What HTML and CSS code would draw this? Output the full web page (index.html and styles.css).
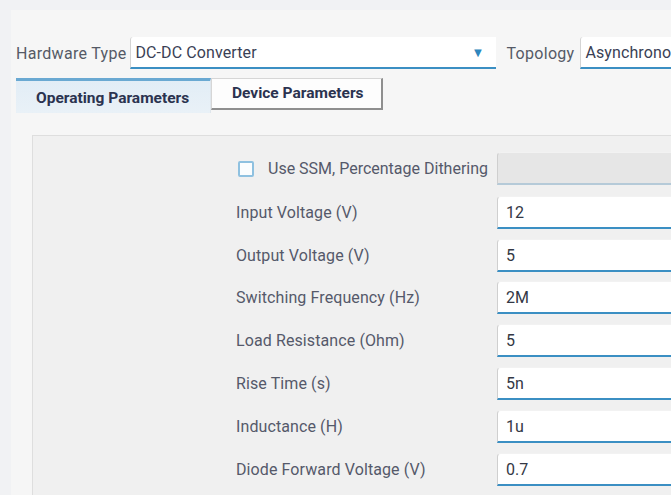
FILE: index.html
```html
<!DOCTYPE html>
<html lang="en">
<head>
<meta charset="utf-8">
<title>Simulation Setup</title>
<link rel="stylesheet" href="styles.css">
</head>
<body>
<div class="window">
  <div class="toolbar">
    <span class="field-label">Hardware Type</span>
    <div class="select hw-select">
      <span class="select-value">DC-DC Converter</span>
      <span class="select-arrow">&#9660;</span>
    </div>
    <span class="field-label topo-label">Topology</span>
    <div class="select topo-select">
      <span class="select-value">Asynchronous Buck</span>
    </div>
  </div>

  <div class="tabs">
    <div class="tab tab-active">Operating Parameters</div>
    <div class="tab tab-idle">Device Parameters</div>
  </div>

  <div class="tab-body">
    <div class="param-panel">
      <div class="form">
        <label class="check-row">
          <span class="checkbox"></span>
          <span class="check-text">Use SSM, Percentage Dithering</span>
        </label>
        <div class="input input-disabled"></div>

        <span class="row-label">Input Voltage (V)</span>
        <div class="input">12</div>

        <span class="row-label">Output Voltage (V)</span>
        <div class="input">5</div>

        <span class="row-label">Switching Frequency (Hz)</span>
        <div class="input">2M</div>

        <span class="row-label">Load Resistance (Ohm)</span>
        <div class="input">5</div>

        <span class="row-label">Rise Time (s)</span>
        <div class="input">5n</div>

        <span class="row-label">Inductance (H)</span>
        <div class="input">1u</div>

        <span class="row-label">Diode Forward Voltage (V)</span>
        <div class="input">0.7</div>
      </div>
    </div>
  </div>
</div>
</body>
</html>
```

FILE: styles.css
```css
* {
  box-sizing: border-box;
}

html, body {
  margin: 0;
  height: 100%;
  overflow: hidden;
}

body {
  background: #f1f2f4;
  font-family: Roboto, "Noto Sans", "Liberation Sans", sans-serif;
  font-size: 16px;
  color: #555;
  padding: 10px 0 0 11px;
}

.window {
  background: #f6f6f6;
  height: 100%;
  padding: 27px 0 0 5px;
  overflow: hidden;
}

/* top selector bar */
.toolbar {
  display: flex;
  align-items: center;
  height: 32px;
}

.field-label {
  color: #555a66;
  white-space: nowrap;
  letter-spacing: 0.3px;
  flex: none;
}

.select {
  display: flex;
  align-items: center;
  height: 32px;
  background: #fff;
  border-left: 1px solid #d4d4d4;
  border-bottom: 2px solid #3b8fc3;
  border-top-left-radius: 3px;
  padding: 0 0 0 4px;
  color: #3a3f55;
  white-space: nowrap;
  overflow: hidden;
  flex: none;
}

.hw-select {
  width: 366px;
  margin-left: 4px;
}

.select-value {
  flex: 1;
  letter-spacing: 0.1px;
}

.select-arrow {
  color: #2f86bd;
  font-size: 13px;
  margin-right: 12px;
}

.topo-label {
  margin-left: 10px;
}

.topo-select {
  width: 120px;
  margin-left: 6px;
}

/* tab strip */
.tabs {
  display: flex;
  align-items: flex-start;
  margin-top: 9px;
  height: 35px;
}

.tab {
  font-weight: bold;
  font-size: 15.5px;
  color: #2b3350;
  letter-spacing: 0;
  white-space: nowrap;
}

.tab-active {
  width: 195px;
  height: 35px;
  padding: 8px 0 0 20px;
  background: linear-gradient(#e2edf6, #e9f1f7);
  border-top: 3px solid #6aa9d2;
  border-right: 1px solid #dfe6ec;
}

.tab-idle {
  width: 172px;
  height: 32px;
  padding: 5px 0 0 20px;
  background: #fdfdfd;
  border: 1px solid #d6d6d6;
  border-right: 2px solid #8f8f8f;
  border-bottom: 2px solid #8f8f8f;
}

/* tab content */
.tab-body {
  background: #f6f6f6;
  padding: 22px 0 0 16px;
  height: 400px;
}

.param-panel {
  background: #f0f0f0;
  border: 1px solid #dedede;
  border-right: none;
  height: 400px;
  padding: 17px 0 0 203px;
}

.form {
  display: grid;
  grid-template-columns: 261px 200px;
  grid-auto-rows: 33px;
  row-gap: 9.8px;
  align-items: center;
}

.check-row {
  display: flex;
  align-items: center;
  margin-bottom: 2px;
}

.form > .check-row + .input {
  margin-bottom: 2px;
}

.checkbox {
  width: 16px;
  height: 16px;
  border: 2px solid #8fc1e0;
  border-radius: 2px;
  background: #fbfdfe;
  margin-left: 2px;
  flex: none;
}

.check-text {
  margin-left: 14px;
  color: #55596a;
  letter-spacing: 0;
  white-space: nowrap;
}

.row-label {
  color: #55596a;
  letter-spacing: 0.1px;
  white-space: nowrap;
}

.input {
  height: 33px;
  background: #fff;
  border-left: 1px solid #cfcfcf;
  border-top: 1px solid #f2f2f2;
  border-bottom: 2px solid #3b8fc3;
  border-top-left-radius: 4px;
  padding: 6px 0 0 8px;
  color: #333845;
}

.input-disabled {
  background: #e6e6e6;
  border-bottom-color: #b5cad8;
}
```
